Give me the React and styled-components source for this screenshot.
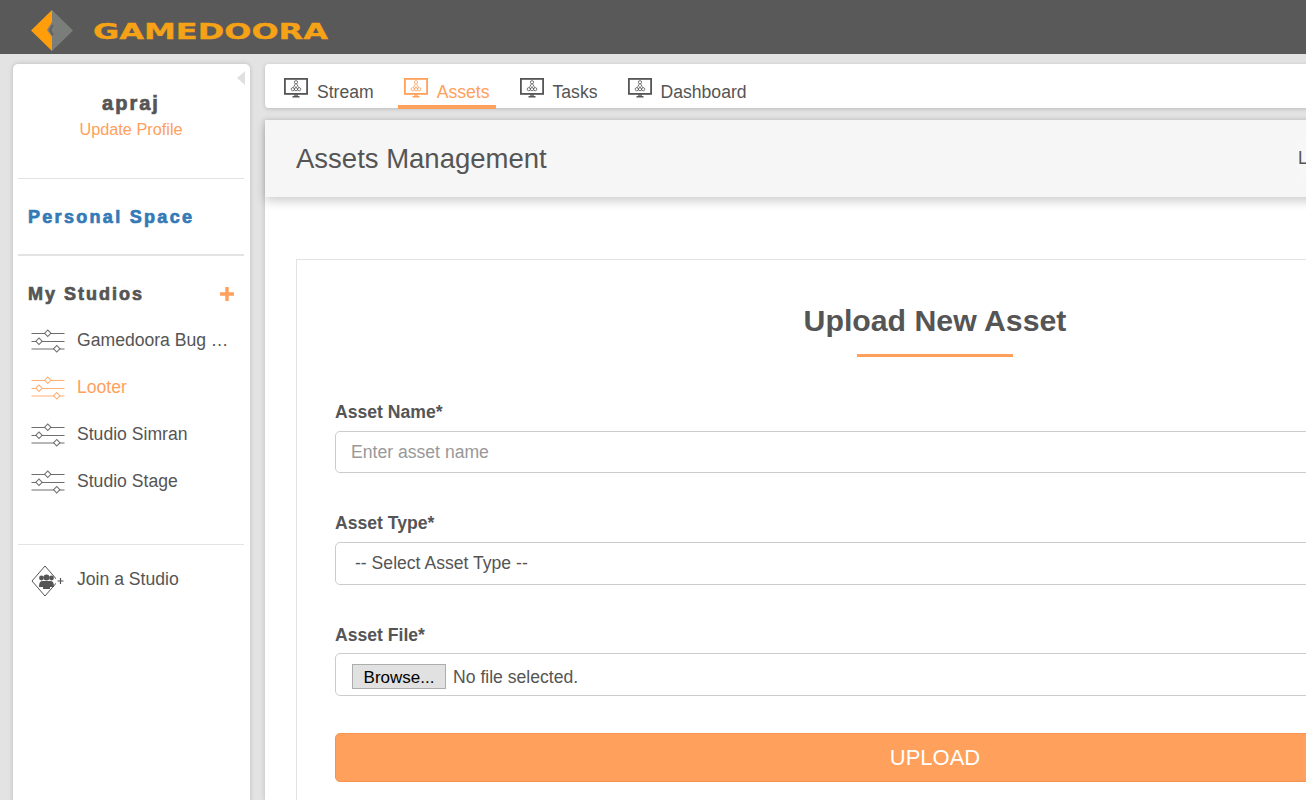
import React from 'react';
import styled, { createGlobalStyle } from 'styled-components';

const ORANGE = '#ffa05c';
const TEXT = '#555';

const GlobalStyle = createGlobalStyle`
  html, body {
    margin: 0;
    height: 100%;
    overflow: hidden;
    background: #e3e3e3;
    font-family: "Liberation Sans", Arial, sans-serif;
    color: ${TEXT};
  }
  * {
    box-sizing: border-box;
  }
`;

const Shell = styled.div`
  width: 1306px;
  height: 800px;
  overflow: hidden;
`;

const TopBar = styled.header`
  display: flex;
  align-items: center;
  height: 54px;
  padding: 7px 0 0 31px;
  background: #595959;
`;

const LogoText = styled.span`
  display: block;
  margin: 2px 0 0 20px;
  font-family: "DejaVu Sans", sans-serif;
  font-size: 20.5px;
  line-height: 22px;
  font-weight: 700;
  color: #f5a216;
  -webkit-text-stroke: 0.3px #f5a216;
  transform: scaleX(1.56);
  transform-origin: left center;
`;

const Columns = styled.div`
  display: flex;
  gap: 15px;
  padding: 10px 0 0 13px;
`;

const Sidebar = styled.aside`
  position: relative;
  flex: none;
  width: 237px;
  height: 760px;
  padding: 0 6px 0 5px;
  background: #fff;
  border-radius: 5px;
  box-shadow: 0 0 5px rgba(0, 0, 0, 0.18);
`;

const CollapseArrow = styled.span`
  position: absolute;
  top: 7px;
  right: 5px;
  width: 0;
  height: 0;
  border-style: solid;
  border-width: 7px 8px 7px 0;
  border-color: transparent #e0e0e0 transparent transparent;
`;

const Profile = styled.div`
  height: 115px;
  padding-top: 27px;
  text-align: center;
  border-bottom: 1px solid #e3e3e3;
`;

const UserName = styled.div`
  font-size: 20px;
  line-height: 24px;
  font-weight: 700;
  letter-spacing: 2px;
  -webkit-text-stroke: 0.7px ${TEXT};
`;

const ProfileLink = styled.a`
  display: block;
  margin-top: 2px;
  font-size: 16.3px;
  line-height: 24px;
  color: ${ORANGE};
`;

const PersonalSpace = styled.div`
  display: flex;
  align-items: center;
  height: 77px;
  padding: 2px 0 0 10px;
  font-size: 18px;
  font-weight: 700;
  letter-spacing: 2.3px;
  color: #337ab7;
  -webkit-text-stroke: 0.7px #337ab7;
  border-bottom: 2px solid #e3e3e3;
`;

const StudiosHead = styled.div`
  display: flex;
  align-items: center;
  justify-content: space-between;
  height: 74px;
  padding: 2px 10px 0;
  font-size: 18px;
  font-weight: 700;
  letter-spacing: 2px;
  -webkit-text-stroke: 0.7px ${TEXT};
`;

const StudioList = styled.div`
  padding-bottom: 39px;
  margin-top: -13px;
  border-bottom: 1px solid #e3e3e3;
`;

const SideRow = styled.div`
  display: flex;
  align-items: center;
  gap: 12px;
  height: 47px;
  padding-left: 13px;
  font-size: 17.6px;
  color: ${p => (p.$active ? ORANGE : TEXT)};
`;

const RowLabel = styled.span`
  width: 153px;
  white-space: nowrap;
  overflow: hidden;
  text-overflow: ellipsis;
`;

const JoinBlock = styled.div`
  padding-top: 11px;
`;

const Main = styled.main`
  flex: none;
  width: 1340px;
`;

const Tabs = styled.nav`
  display: flex;
  gap: 18px;
  height: 44px;
  padding-left: 13px;
  background: #fff;
  border-radius: 4px 0 0 4px;
  box-shadow: 0 1px 4px rgba(0, 0, 0, 0.18);
`;

const Tab = styled.a`
  display: flex;
  align-items: flex-start;
  gap: 9px;
  height: 45px;
  padding: 15px 6px 0;
  font-size: 17.6px;
  line-height: 26px;
  color: ${p => (p.$active ? ORANGE : TEXT)};
  border-bottom: 4px solid ${p => (p.$active ? ORANGE : 'transparent')};
`;

const TabIcon = styled.span`
  display: block;
  height: 20px;
  margin-top: -1px;
`;

const Panel = styled.section`
  margin-top: 12px;
  background: #fff;
  height: 680px;
  box-shadow: -1px 0 4px rgba(0, 0, 0, 0.12);
`;

const PageHead = styled.div`
  display: flex;
  align-items: center;
  height: 77px;
  padding: 0 0 0 31px;
  background: #f6f6f6;
  box-shadow: 0 4px 10px rgba(0, 0, 0, 0.2);
`;

const PageTitle = styled.h1`
  width: 1002px;
  margin: 0;
  font-size: 27.5px;
  font-weight: 400;
`;

const LogoutButton = styled.button`
  width: 75px;
  height: 38px;
  padding: 0;
  border: none;
  border-radius: 4px;
  background: #f7f7f7;
  font: inherit;
  font-size: 17.6px;
  color: ${TEXT};
  text-align: left;
`;

const Card = styled.div`
  width: 1278px;
  height: 560px;
  margin: 62px 0 0 31px;
  padding: 0 38px;
  border: 1px solid #e3e3e3;
`;

const CardTitle = styled.h2`
  margin: 0;
  padding-top: 43px;
  font-size: 30.25px;
  line-height: 36px;
  font-weight: 700;
  text-align: center;
`;

const TitleRule = styled.div`
  width: 156px;
  height: 3px;
  margin: 15px auto 44px;
  background: ${ORANGE};
`;

const Field = styled.div`
  margin-bottom: 39px;

  &:last-of-type {
    margin-bottom: 37px;
  }
`;

const Label = styled.label`
  display: block;
  height: 30px;
  font-size: 17.6px;
  line-height: 22px;
  font-weight: 700;
`;

const TextInput = styled.input`
  display: block;
  width: 100%;
  height: 42px;
  padding: 0 15px;
  border: 1px solid #ccc;
  border-radius: 5px;
  font: inherit;
  font-size: 17.6px;
  outline: none;

  &::placeholder {
    color: #999;
    opacity: 1;
  }
`;

const SelectBox = styled.div`
  display: flex;
  align-items: center;
  height: 43px;
  padding-left: 19px;
  border: 1px solid #ccc;
  border-radius: 5px;
  font-size: 17.6px;
`;

const FileBox = styled.div`
  display: flex;
  align-items: center;
  gap: 7px;
  height: 43px;
  margin-top: -1px;
  padding: 6px 0 0 16px;
  border: 1px solid #ccc;
  border-radius: 5px;
  font-size: 17.6px;
`;

const BrowseButton = styled.span`
  display: flex;
  align-items: center;
  justify-content: center;
  width: 94px;
  height: 25px;
  margin-top: -2px;
  padding-top: 2px;
  background: #e1e1e1;
  border: 1px solid #adadad;
  font-size: 17px;
  color: #000;
`;

const UploadButton = styled.button`
  display: block;
  width: 100%;
  height: 49px;
  padding: 0;
  background: ${ORANGE};
  border: 1px solid #f59350;
  border-radius: 5px;
  color: #fff;
  font: inherit;
  font-size: 22px;
`;

const Logo = () => (
  <svg width="42" height="41" viewBox="0 0 42 41">
    <polygon points="21,0 42,20.500 21,41 15,20.500" fill="#7b7d7b" />
    <polygon points="21,0 21,12 16,20 21,27 21,41 0,20.500" fill="#ff9d0a" />
    <path d="M22 15L19 20L22 25" fill="none" stroke="#5c5c5c" strokeWidth="1.500" />
  </svg>
);

const Monitor = () => (
  <svg width="24" height="20" viewBox="0 0 24 20" fill="none" stroke="currentColor">
    <rect x="0.9" y="0.9" width="22.2" height="15" strokeWidth="1.800" />
    <path d="M8.500 18.800h7M11 16v2.500M13 16v2.500" strokeWidth="1.400" />
    <circle cx="12" cy="4.200" r="1.600" strokeWidth="0.800" />
    <circle cx="8.800" cy="11.200" r="1.600" strokeWidth="0.800" />
    <circle cx="12" cy="11.200" r="1.600" strokeWidth="0.800" />
    <circle cx="15.200" cy="11.200" r="1.600" strokeWidth="0.800" />
    <path d="M11.400 5.800L9.400 9.600M12.600 5.800L14.600 9.600M12 8.200v1.400" strokeWidth="0.800" />
  </svg>
);

const Sliders = () => (
  <svg width="34" height="24" viewBox="0 0 34 24" fill="none" stroke="currentColor" strokeWidth="1" strokeOpacity="0.85">
    <path d="M0.500 4.500h33M0.500 12.500h33M0.500 20h33" />
    <rect x="14.500" y="2" width="4.500" height="4.500" transform="rotate(45 16.750 4.250)" fill="#fff" />
    <rect x="5.750" y="10" width="4.500" height="4.500" transform="rotate(45 8 12.250)" fill="#fff" />
    <rect x="23.500" y="17.500" width="4.500" height="4.500" transform="rotate(45 25.750 19.750)" fill="#fff" />
  </svg>
);

const JoinIcon = () => (
  <svg width="34" height="34" viewBox="0 0 34 34">
    <polygon points="14,3 27,18 14,33 1,18" fill="none" stroke={TEXT} strokeWidth="1" />
    <rect x="25" y="15" width="3" height="6" fill="#fff" />
    <path d="M26.500 18h6M29.500 15v6" stroke={TEXT} strokeWidth="1.200" />
    <circle cx="10.500" cy="15" r="2.400" fill={TEXT} />
    <circle cx="20.500" cy="15" r="2.400" fill={TEXT} />
    <circle cx="15.500" cy="14.500" r="3" fill={TEXT} />
    <path d="M8 24c0-4 1-6 3-6h9c2 0 3 2 3 6h-4v2h-7v-2z" fill={TEXT} />
  </svg>
);

const tabs = [
  { label: 'Stream' },
  { label: 'Assets', active: true },
  { label: 'Tasks' },
  { label: 'Dashboard' },
];

const studios = [
  { name: 'Gamedoora Bug Tracker' },
  { name: 'Looter', active: true },
  { name: 'Studio Simran' },
  { name: 'Studio Stage' },
];

const App = () => {
  return (
    <Shell>
      <GlobalStyle />
      <TopBar>
        <Logo />
        <LogoText>GAMEDOORA</LogoText>
      </TopBar>
      <Columns>
        <Sidebar>
          <CollapseArrow />
          <Profile>
            <UserName>apraj</UserName>
            <ProfileLink>Update Profile</ProfileLink>
          </Profile>
          <PersonalSpace>Personal Space</PersonalSpace>
          <StudiosHead>
            My Studios
            <svg width="14" height="14" viewBox="0 0 14 14">
              <path d="M7 0v14M0 7h14" stroke={ORANGE} strokeWidth="3.400" />
            </svg>
          </StudiosHead>
          <StudioList>
            {studios.map(s => (
              <SideRow key={s.name} $active={s.active}>
                <Sliders />
                <RowLabel>{s.name}</RowLabel>
              </SideRow>
            ))}
          </StudioList>
          <JoinBlock>
            <SideRow>
              <JoinIcon />
              <RowLabel>Join a Studio</RowLabel>
            </SideRow>
          </JoinBlock>
        </Sidebar>
        <Main>
          <Tabs>
            {tabs.map(t => (
              <Tab key={t.label} $active={t.active}>
                <TabIcon>
                  <Monitor />
                </TabIcon>
                {t.label}
              </Tab>
            ))}
          </Tabs>
          <Panel>
            <PageHead>
              <PageTitle>Assets Management</PageTitle>
              <LogoutButton>Logout</LogoutButton>
            </PageHead>
            <Card>
              <CardTitle>Upload New Asset</CardTitle>
              <TitleRule />
              <Field>
                <Label>Asset Name*</Label>
                <TextInput placeholder="Enter asset name" />
              </Field>
              <Field>
                <Label>Asset Type*</Label>
                <SelectBox>-- Select Asset Type --</SelectBox>
              </Field>
              <Field>
                <Label>Asset File*</Label>
                <FileBox>
                  <BrowseButton>Browse...</BrowseButton>
                  No file selected.
                </FileBox>
              </Field>
              <UploadButton>UPLOAD</UploadButton>
            </Card>
          </Panel>
        </Main>
      </Columns>
    </Shell>
  );
};

export default App;
